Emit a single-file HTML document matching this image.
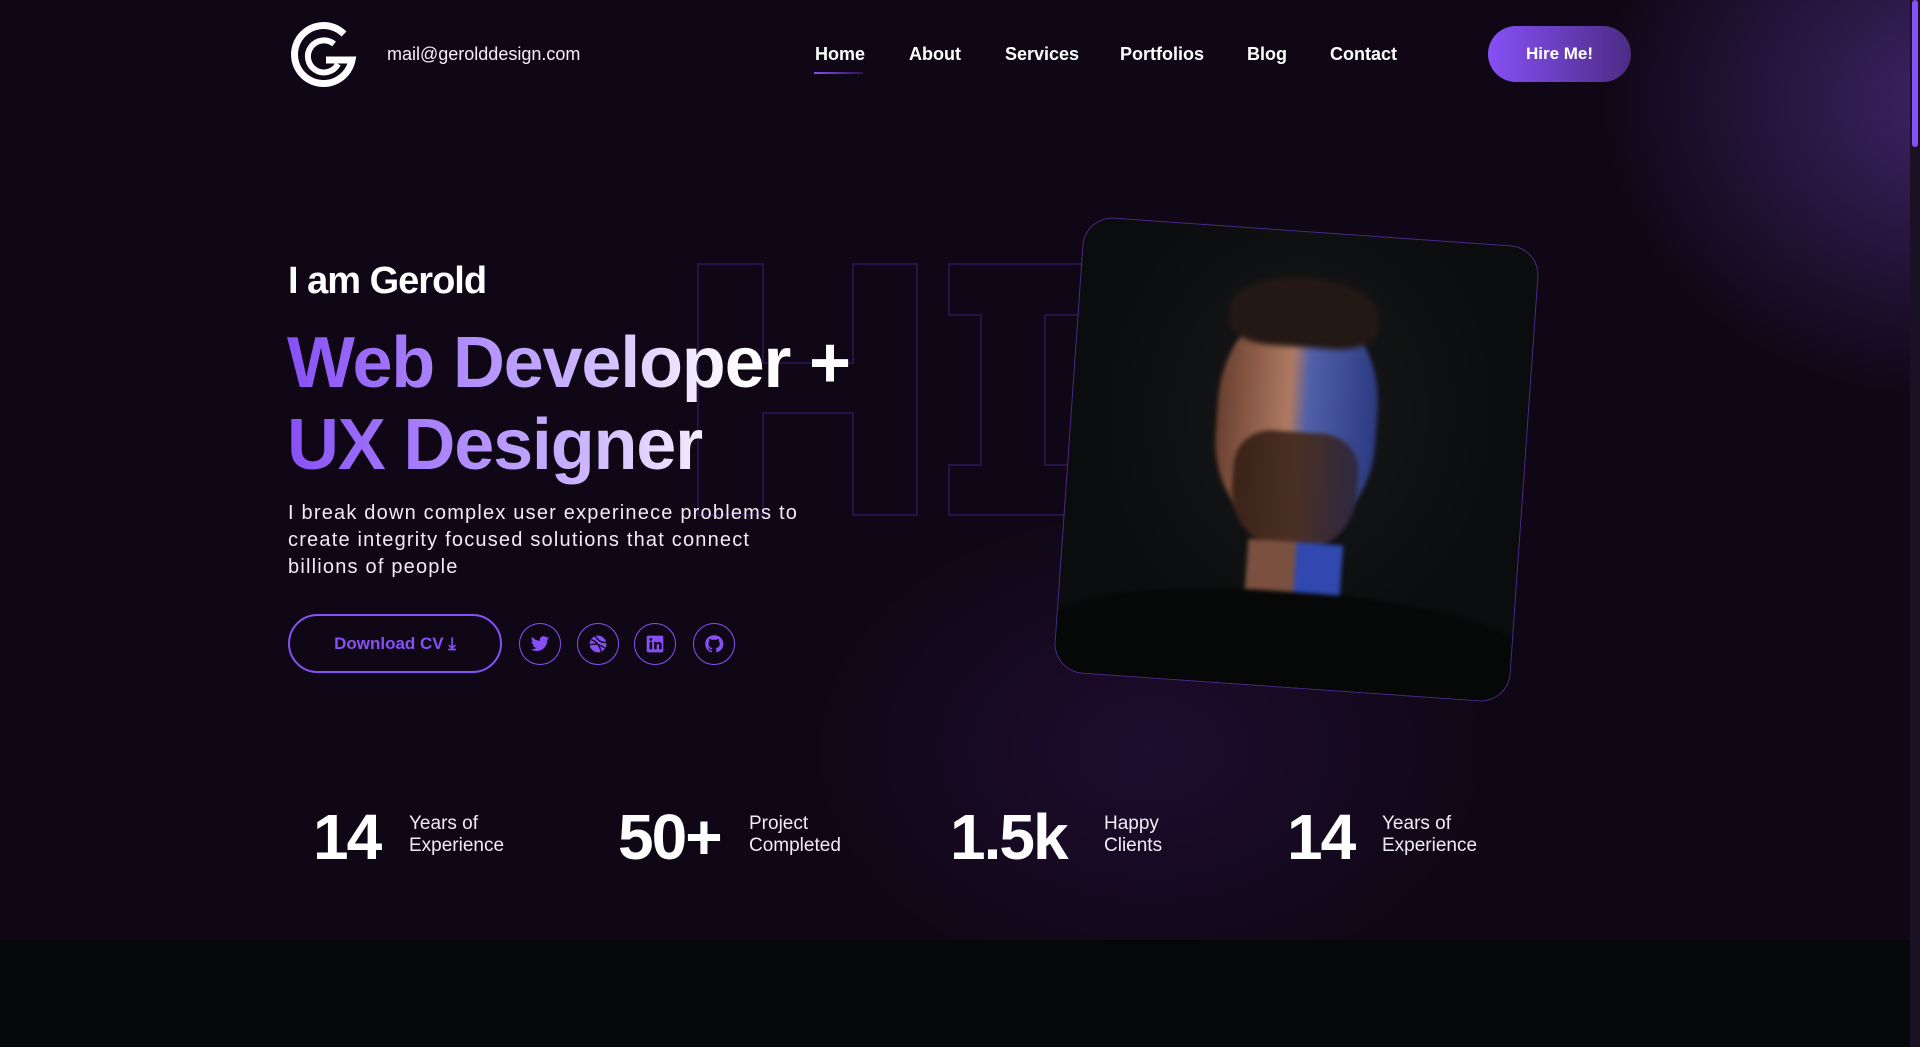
<!DOCTYPE html>
<html><head><meta charset="utf-8">
<style>
*{margin:0;padding:0;box-sizing:border-box}
html,body{width:1920px;height:1047px;overflow:hidden;background:#050709}
body{font-family:"Liberation Sans",sans-serif;color:#fff;position:relative}
.hero{position:absolute;left:0;top:0;width:1910px;height:940px;background:#0f0715;overflow:hidden}
.glow1{position:absolute;left:1600px;top:-200px;width:700px;height:600px;background:radial-gradient(closest-side,rgba(120,70,200,.45),rgba(120,70,200,0));}
.glow2{position:absolute;left:800px;top:500px;width:700px;height:500px;background:radial-gradient(closest-side,rgba(50,18,80,.45),rgba(50,18,80,0));}
.below{position:absolute;left:0;top:940px;width:1910px;height:107px;background:#050709}
.sb{position:absolute;left:1910px;top:0;width:10px;height:1047px;background:#1a1124}
.sb i{position:absolute;left:2px;top:0;width:6px;height:147px;background:#8750f7;border-radius:3px}
.logo{position:absolute;left:288px;top:20px}
.mail{position:absolute;left:387px;top:44px;font-size:18px;color:#f3f0f7}
.nav{position:absolute;top:44px;font-size:18px;font-weight:bold;color:#fff}
.ul{position:absolute;left:814px;top:72px;width:49px;height:2px;background:linear-gradient(90deg,#8750f7,#2a1454)}
.hire{position:absolute;left:1488px;top:26px;width:143px;height:56px;border-radius:28px;background:linear-gradient(90deg,#8750f7,#4b2c83);font-weight:bold;font-size:17px;text-align:center;line-height:56px}
.hi{position:absolute;left:0;top:0}
.h3{position:absolute;left:288px;top:260px;font-size:38px;font-weight:bold;letter-spacing:-1px}
.h1{position:absolute;left:287px;top:322px;font-size:72px;font-weight:bold;line-height:82px;letter-spacing:-1.2px;background:linear-gradient(90deg,#8750f7 0%,#c9b2ff 45%,#f3eeff 65%,#fff 72%);-webkit-background-clip:text;background-clip:text;color:transparent;width:640px}
.p{position:absolute;left:288px;top:500px;font-size:20px;line-height:27px;letter-spacing:1.2px;color:#f0ecf5;width:520px}
.dl{position:absolute;left:288px;top:614px;width:214px;height:59px;border:2px solid #8750f7;border-radius:30px;color:#8750f7;font-weight:bold;font-size:17px;line-height:55px;text-align:center}
.soc{position:absolute;top:623px;width:42px;height:42px;border:1.5px solid #8750f7;border-radius:50%;display:flex;align-items:center;justify-content:center}
.card{position:absolute;left:1068px;top:231px;width:457px;height:457px;border-radius:30px;transform:rotate(4deg);border:1.5px solid #4a2a8a;overflow:hidden;background:#0d0f10}
.num{position:absolute;top:800px;font-size:64px;font-weight:bold;letter-spacing:-2px}
.lab{position:absolute;top:813px;font-size:19px;line-height:22px;color:#f0ecf5}
</style></head><body>
<div class="hero">
<div class="glow1"></div><div class="glow2"></div>
<svg class="hi" width="1200" height="600"><path d="M698 264H763V363H853V264H917V515H853V413H763V515H698Z M949 264H1100V315H1045V465H1100V515H949V465H981V315H949Z" fill="none" stroke="#24124a" stroke-width="2"/></svg>
<svg class="logo" width="70" height="70" viewBox="0 0 70 70"><path d="M56 14 A29 29 0 1 0 64 40 L38 40" fill="none" stroke="#fff" stroke-width="7"/><path d="M46 24 A16 16 0 1 0 50 44" fill="none" stroke="#fff" stroke-width="6"/></svg>
<div class="mail">mail@gerolddesign.com</div>
<div class="nav" style="left:815px">Home</div>
<div class="nav" style="left:909px">About</div>
<div class="nav" style="left:1005px">Services</div>
<div class="nav" style="left:1120px">Portfolios</div>
<div class="nav" style="left:1247px">Blog</div>
<div class="nav" style="left:1330px">Contact</div>
<div class="ul"></div>
<div class="hire">Hire Me!</div>
<div class="h3">I am Gerold</div>
<div class="h1">Web Developer + UX Designer</div>
<div class="p">I break down complex user experinece problems to create integrity focused solutions that connect billions of people</div>
<div class="dl">Download CV &#10515;</div>
<div class="soc" style="left:519px"><svg width="20" height="20" viewBox="0 0 24 24"><path fill="#8750f7" d="M23 5a9 9 0 0 1-2.6.7A4.5 4.5 0 0 0 22.4 3a9 9 0 0 1-2.9 1.1 4.5 4.5 0 0 0-7.7 4.1A12.8 12.8 0 0 1 2.5 3.5a4.5 4.5 0 0 0 1.4 6 4.5 4.5 0 0 1-2-.6 4.5 4.5 0 0 0 3.6 4.5 4.5 4.5 0 0 1-2 .1 4.5 4.5 0 0 0 4.2 3.1A9 9 0 0 1 1 18.5 12.8 12.8 0 0 0 7.9 20.5c8.3 0 12.8-6.9 12.8-12.8v-.6A9 9 0 0 0 23 5z"/></svg></div>
<div class="soc" style="left:577px"><svg width="20" height="20" viewBox="0 0 24 24"><circle cx="12" cy="12" r="10" fill="#8750f7"/><path d="M4 7c5 1 10 6 12 15M2 13c6-2 12-1 18 4M8 2c4 5 7 9 14 8" stroke="#0f0715" stroke-width="1.6" fill="none"/></svg></div>
<div class="soc" style="left:634px"><svg width="20" height="20" viewBox="0 0 24 24"><rect x="2" y="2" width="20" height="20" rx="2" fill="#8750f7"/><rect x="5.5" y="9.5" width="3" height="9" fill="#0f0715"/><circle cx="7" cy="6.5" r="1.7" fill="#0f0715"/><path d="M11 9.5h3v1.5c1-2 6-2.3 6 2v5.5h-3v-5c0-2-3-2-3 0v5h-3z" fill="#0f0715"/></svg></div>
<div class="soc" style="left:693px"><svg width="20" height="20" viewBox="0 0 24 24"><path fill="#8750f7" d="M12 1.5a10.5 10.5 0 0 0-3.3 20.5c.5.1.7-.2.7-.5v-1.8c-2.9.6-3.5-1.4-3.5-1.4-.5-1.2-1.2-1.5-1.2-1.5-1-.7.1-.6.1-.6 1 .1 1.6 1.1 1.6 1.1.9 1.6 2.5 1.1 3.1.9.1-.7.4-1.1.7-1.4-2.3-.3-4.8-1.2-4.8-5.2 0-1.1.4-2.1 1.1-2.8-.1-.3-.5-1.4.1-2.8 0 0 .9-.3 2.9 1.1a10 10 0 0 1 5.3 0c2-1.4 2.9-1.1 2.9-1.1.6 1.4.2 2.5.1 2.8.7.7 1.1 1.7 1.1 2.8 0 4-2.5 4.9-4.8 5.2.4.3.7 1 .7 1.9v2.9c0 .3.2.6.7.5A10.5 10.5 0 0 0 12 1.5z"/></svg></div>
<div class="card">
<div style="position:absolute;left:0;top:0;width:100%;height:100%;background:radial-gradient(ellipse at 50% 40%,#161718 0%,#0b0c0d 70%)"></div>
<div style="position:absolute;left:145px;top:75px;width:160px;height:220px;border-radius:45% 45% 40% 40%;background:linear-gradient(90deg,#6a4030 0%,#b07a62 45%,#5060a8 56%,#2b3a80 100%);filter:blur(2px)"></div>
<div style="position:absolute;left:150px;top:45px;width:150px;height:70px;border-radius:50% 50% 30% 30%;background:#231814;filter:blur(3px)"></div>
<div style="position:absolute;left:165px;top:200px;width:125px;height:120px;border-radius:30% 30% 50% 50%;background:linear-gradient(90deg,#3a2218,#4a3024 50%,#2e2840);filter:blur(2px)"></div>
<div style="position:absolute;left:185px;top:310px;width:95px;height:70px;background:linear-gradient(90deg,#7a5040 50%,#3048b0 52%);filter:blur(2px)"></div>
<div style="position:absolute;left:-20px;top:360px;width:500px;height:130px;border-radius:45% 45% 0 0;background:#060707;filter:blur(2px)"></div>
</div>
<div class="num" style="left:313px">14</div><div class="lab" style="left:409px">Years of<br>Experience</div>
<div class="num" style="left:618px">50+</div><div class="lab" style="left:749px">Project<br>Completed</div>
<div class="num" style="left:950px">1.5k</div><div class="lab" style="left:1104px">Happy<br>Clients</div>
<div class="num" style="left:1287px">14</div><div class="lab" style="left:1382px">Years of<br>Experience</div>
</div>
<div class="below"></div>
<div class="sb"><i></i></div>
</body></html>
